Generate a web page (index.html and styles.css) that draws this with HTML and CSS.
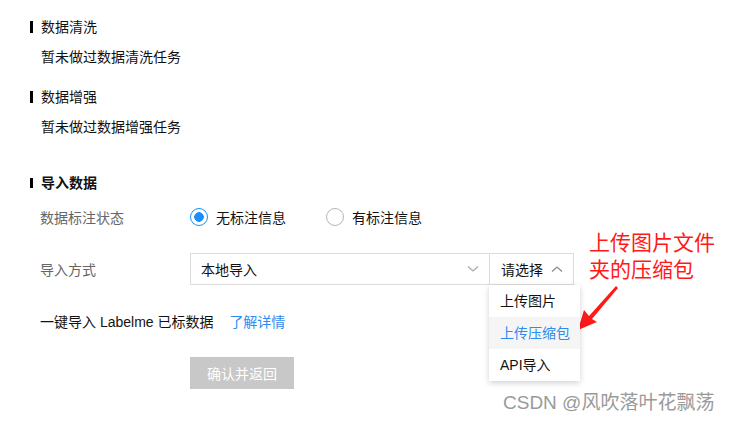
FILE: index.html
```html
<!DOCTYPE html>
<html lang="zh-CN">
<head>
    <meta charset="UTF-8">
    <title>导入数据</title>
    <link rel="stylesheet" href="styles.css">
</head>
<body>
    <div class="page">
        <div class="section">
            <h3 class="section-title">数据清洗</h3>
            <p class="empty">暂未做过数据清洗任务</p>
        </div>

        <div class="section">
            <h3 class="section-title">数据增强</h3>
            <p class="empty">暂未做过数据增强任务</p>
        </div>

        <div class="section import">
            <h3 class="section-title bold">导入数据</h3>

            <div class="form-row">
                <span class="form-label">数据标注状态</span>
                <div class="radios">
                    <label class="radio checked"><span class="dot"></span>无标注信息</label>
                    <label class="radio"><span class="dot"></span>有标注信息</label>
                </div>
            </div>

            <div class="form-row select-row">
                <span class="form-label">导入方式</span>
                <div class="select-group">
                    <div class="select main">
                        <span>本地导入</span>
                        <svg class="chevron" width="12" height="8" viewBox="0 0 12 8"><path d="M1 1.5 L6 6 L11 1.5" fill="none" stroke="#a9a9a9" stroke-width="1.3"/></svg>
                    </div>
                    <div class="select sub">
                        <span>请选择</span>
                        <svg class="chevron" width="12" height="8" viewBox="0 0 12 8"><path d="M1 6.5 L6 2 L11 6.5" fill="none" stroke="#8c8c8c" stroke-width="1.3"/></svg>
                        <ul class="menu">
                            <li>上传图片</li>
                            <li class="active">上传压缩包</li>
                            <li>API导入</li>
                        </ul>
                    </div>
                </div>
            </div>

            <div class="labelme">一键导入 Labelme 已标数据 <a href="#" class="more">了解详情</a></div>

            <button class="confirm" disabled>确认并返回</button>
        </div>
    </div>

    <div class="note">上传图片文件<br>夹的压缩包</div>
    <svg class="arrow" width="50" height="50" viewBox="0 0 50 50">
        <path d="M46 2 L44 0 L17 30 L12 24 L6 44 L25 36 L20 33 Z" fill="#ff1a1a"/>
    </svg>

    <div class="watermark">CSDN @风吹落叶花飘荡</div>
</body>
</html>
```

FILE: styles.css
```css
* {
    margin: 0;
    padding: 0;
    box-sizing: border-box;
}

body {
    width: 730px;
    height: 422px;
    background: #fff;
    font-family: 'Liberation Sans', 'Noto Sans CJK SC', sans-serif;
    font-size: 14px;
    color: #111;
    position: relative;
    overflow: hidden;
}

.page {
    padding: 17px 0 0 30px;
}

.section {
    margin-bottom: 20px;
}

.section-title {
    display: flex;
    align-items: center;
    font-size: 14px;
    font-weight: 400;
    line-height: 20px;
}

.section-title::before {
    content: "";
    width: 3px;
    height: 12px;
    background: #000;
    margin-right: 8px;
}

.section-title.bold {
    font-weight: 700;
}

.section-title.bold::before {
    height: 10px;
}

.empty {
    line-height: 20px;
    margin: 10px 0 0 11px;
}

.import {
    margin-top: 36px;
}

.form-row {
    display: flex;
    align-items: center;
    margin-top: 14px;
    height: 20px;
}

.form-label {
    width: 160px;
    padding-left: 10px;
    color: #666;
}

.radios {
    display: flex;
    gap: 19px;
}

.radio {
    display: flex;
    align-items: center;
    gap: 8px;
    width: 117px;
}

.dot {
    width: 18px;
    height: 18px;
    border-radius: 50%;
    border: 1px solid #b5b5b5;
    background: #fff;
}

.radio.checked .dot {
    border-color: #1890ff;
    background: radial-gradient(circle, #1890ff 0 4.5px, #fff 5px);
}

.select-row {
    margin-top: 26px;
    height: 32px;
}

.select-group {
    display: flex;
    height: 32px;
}

.select {
    display: flex;
    align-items: center;
    justify-content: space-between;
    border: 1px solid #dcdcdc;
    padding: 0 10px;
    position: relative;
}

.select.main {
    width: 300px;
}

.select.sub {
    width: 84px;
    border-left: none;
    padding: 0 10px 0 11px;
}

.menu {
    position: absolute;
    top: 31px;
    left: -1px;
    width: 91px;
    list-style: none;
    background: #fff;
    box-shadow: 0 2px 6px rgba(0, 0, 0, 0.18);
    z-index: 2;
}

.menu li {
    height: 32px;
    line-height: 32px;
    padding-left: 11px;
    color: #111;
}

.menu li.active {
    background: #f5f5f5;
    color: #2d8cf0;
}

.labelme {
    margin: 27px 0 0 10px;
    line-height: 20px;
}

.more {
    color: #2d8cf0;
    text-decoration: none;
    margin-left: 12px;
}

.confirm {
    display: block;
    margin: 25px 0 0 160px;
    width: 104px;
    height: 32px;
    border: none;
    background: #c8c8c8;
    color: #fff;
    font-family: inherit;
    font-size: 14px;
}

.note {
    position: absolute;
    left: 589px;
    top: 229px;
    font-size: 21px;
    line-height: 27px;
    color: #ff1a1a;
}

.arrow {
    position: absolute;
    left: 572px;
    top: 286px;
}

.watermark {
    position: absolute;
    left: 503px;
    top: 392px;
    font-size: 19px;
    line-height: 22px;
    color: #9a9a9a;
}
```
